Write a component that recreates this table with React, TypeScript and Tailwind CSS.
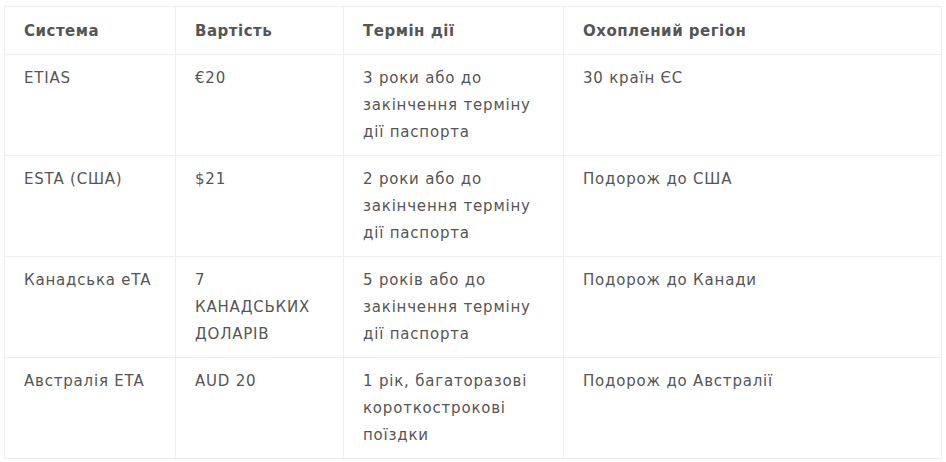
import React from "react";

const rows: string[][] = [
  ["ETIAS", "€20", "3 роки або до закінчення терміну дії паспорта", "30 країн ЄС"],
  ["ESTA (США)", "$21", "2 роки або до закінчення терміну дії паспорта", "Подорож до США"],
  ["Канадська eTA", "7 КАНАДСЬКИХ ДОЛАРІВ", "5 років або до закінчення терміну дії паспорта", "Подорож до Канади"],
  ["Австралія ETA", "AUD 20", "1 рік, багаторазові короткострокові поїздки", "Подорож до Австралії"],
];

const headers = ["Система", "Вартість", "Термін дії", "Охоплений регіон"];

export default function App() {
  return (
    <div className="bg-white w-[946px] h-[462px] pt-[6px] pl-[4px] text-[#555555] text-[15px] leading-[27px] tracking-[0.8px]" style={{ fontFamily: '"DejaVu Sans", "Noto Sans", sans-serif' }}>
      <table className="w-[937px] table-fixed border-collapse">
        <colgroup>
          <col className="w-[171px]" />
          <col className="w-[168px]" />
          <col className="w-[220px]" />
          <col className="w-[378px]" />
        </colgroup>
        <thead>
          <tr>
            {headers.map((h) => (
              <th key={h} className="border border-[#eeeeee] px-[19px] pt-[11px] pb-[9px] text-left align-top font-bold text-[#555555] tracking-[0.5px]">
                {h}
              </th>
            ))}
          </tr>
        </thead>
        <tbody>
          {rows.map((r, i) => (
            <tr key={i}>
              {r.map((c, j) => (
                <td key={j} className="border border-[#eeeeee] px-[19px] pt-[10px] pb-[9px] align-top">
                  {c}
                </td>
              ))}
            </tr>
          ))}
        </tbody>
      </table>
    </div>
  );
}
